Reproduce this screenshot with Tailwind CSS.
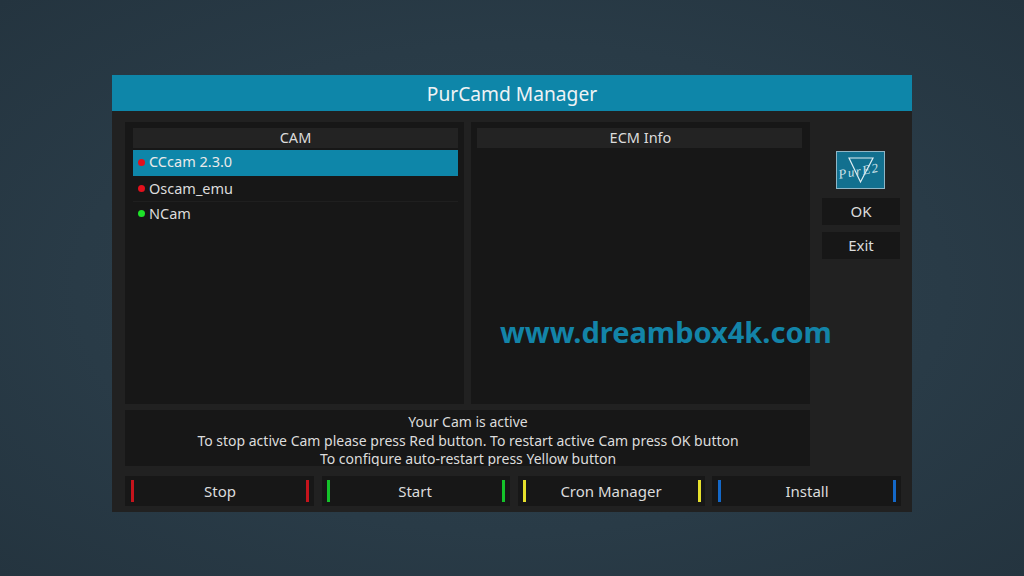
<!DOCTYPE html>
<html>
<head>
<meta charset="utf-8">
<script src="https://cdn.jsdelivr.net/npm/@tailwindcss/browser@4"></script>
</head>
<body class="m-0 p-0">
<div class="relative w-[1024px] h-[576px] overflow-hidden pt-[75px] pl-[112px] bg-[radial-gradient(ellipse_at_center,#2e424e_0%,#293b47_60%,#24343f_100%)] font-['Noto_Sans',sans-serif] text-[#dcdcdc]">
  <div class="w-[800px] h-[437px] bg-[#212121] flex flex-col">
    <div class="h-[36px] bg-[#0e86a9] flex items-center justify-center text-[19.200px] text-[#eef3f5] pt-[2px]">PurCamd Manager</div>
    <div class="flex pt-[11px] pl-[13px]">
      <div class="w-[685px] flex flex-col">
        <div class="flex gap-[7px]">
          <div class="w-[339px] h-[282px] bg-[#171717] pt-[6px] px-[8px] text-[14.500px]">
            <div class="w-[325px] h-[20px] pb-[2px] bg-[#232323] flex items-center justify-center leading-none">CAM</div>
            <div class="w-[325px] h-[26px] mt-[2px] pb-[2px] bg-[#0e86a9] flex items-center pl-[5px] text-[#eaeaea]"><span class="w-[7px] h-[7px] rounded-full bg-[#e3101c] mr-[4px]"></span>CCcam 2.3.0</div>
            <div class="w-[325px] h-[26px] flex items-center pl-[5px] border-b border-[#1f1f1f]"><span class="w-[7px] h-[7px] rounded-full bg-[#e3101c] mr-[4px]"></span>Oscam_emu</div>
            <div class="w-[325px] h-[25px] pb-[2px] flex items-center pl-[5px]"><span class="w-[7px] h-[7px] rounded-full bg-[#1ee32a] mr-[4px]"></span>NCam</div>
          </div>
          <div class="w-[339px] h-[282px] bg-[#171717] pt-[6px] px-[6px] text-[14.500px]">
            <div class="w-[325px] h-[20px] pb-[2px] pl-[2px] bg-[#232323] flex items-center justify-center leading-none">ECM Info</div>
          </div>
        </div>
        <div class="mt-[6px] h-[56px] pl-[1px] bg-[#171717] overflow-hidden text-center text-[14px] leading-[18.500px] pt-[3px]">
          <div>Your Cam is active</div>
          <div>To stop active Cam please press Red button. To restart active Cam press OK button</div>
          <div>To configure auto-restart press Yellow button</div>
        </div>
      </div>
      <div class="ml-[12px] w-[78px] flex flex-col items-center pt-[29px]">
        <svg width="49" height="38" viewBox="0 0 49 38" class="block mr-[1px]">
          <rect x="0.5" y="0.5" width="48" height="37" fill="#12708f" stroke="#8fb6c6"/>
          <path d="M13 7H37L24.500 31Z" fill="none" stroke="#dcecf2" stroke-width="1.200"/>
          <text x="23" y="24" text-anchor="middle" transform="rotate(-10 24.500 20)" font-family="Liberation Serif" font-style="italic" font-size="13" letter-spacing="1.500" fill="#cfe3ea">PurE2</text>
        </svg>
        <div class="mt-[9px] w-[78px] h-[27px] bg-[#171717] flex items-center justify-center text-[15px]">OK</div>
        <div class="mt-[7px] w-[78px] h-[27px] bg-[#171717] flex items-center justify-center text-[15px]">Exit</div>
      </div>
    </div>
    <div class="flex mt-[10px] pl-[13px] text-[15px]">
      <div class="w-[189px] h-[30px] bg-[#171717] flex items-center justify-between pl-[6px] pr-[5px]"><span class="w-[3px] h-[22px] bg-[#c5141c]"></span><span>Stop</span><span class="w-[3px] h-[22px] bg-[#c5141c]"></span></div>
      <div class="ml-[8px] w-[188px] h-[30px] bg-[#171717] flex items-center justify-between pl-[5px] pr-[5px]"><span class="w-[3px] h-[22px] bg-[#14c22a]"></span><span class="-translate-x-[1px]">Start</span><span class="w-[3px] h-[22px] bg-[#14c22a]"></span></div>
      <div class="ml-[8px] w-[187px] h-[30px] bg-[#171717] flex items-center justify-between pl-[5px] pr-[4px]"><span class="w-[3px] h-[22px] bg-[#e6e02c]"></span><span class="-translate-x-[1px]">Cron Manager</span><span class="w-[3px] h-[22px] bg-[#e6e02c]"></span></div>
      <div class="ml-[7px] w-[189px] h-[30px] bg-[#171717] flex items-center justify-between pl-[6px] pr-[5px]"><span class="w-[3px] h-[22px] bg-[#1468c8]"></span><span>Install</span><span class="w-[3px] h-[22px] bg-[#1468c8]"></span></div>
    </div>
  </div>
  <div class="absolute left-[500px] top-[312px] text-[29px] leading-[40px] font-bold text-[#1384a8] whitespace-nowrap">www.dreambox4k.com</div>
</div>
</body>
</html>
